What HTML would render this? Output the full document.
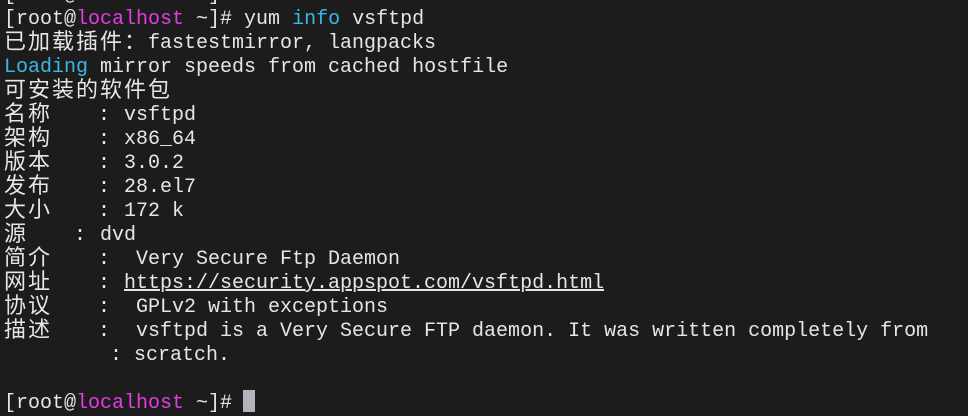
<!DOCTYPE html>
<html><head><meta charset="utf-8"><style>
html,body{margin:0;padding:0;background:#1c1c1c;width:968px;height:416px;overflow:hidden}
.l{position:absolute;left:4px;height:24px;line-height:24px;font-family:"Liberation Mono","Noto Sans CJK SC",monospace;font-size:20px;color:#e6e6e6;white-space:pre;letter-spacing:0}
.m{color:#e23de2}.c{color:#3cb6e4}
.a{position:absolute;top:0}
.z{font-family:"Noto Sans CJK SC",sans-serif;font-size:22px;letter-spacing:2px;display:inline-block;height:24px;line-height:24px;vertical-align:top;position:relative;top:-4px}
</style></head><body>
<div class="l" style="top:-16px">[root@localhost ~]</div>
<div class="l" style="top:8px">[root@<span class="m">localhost</span> ~]# yum <span class="c">info</span> vsftpd</div>
<div class="l" style="top:32px"><span class="z">已加载插件：</span><span class="a" style="left:144px">fastestmirror, langpacks</span></div>
<div class="l" style="top:56px"><span class="c">Loading</span> mirror speeds from cached hostfile</div>
<div class="l" style="top:80px"><span class="z">可安装的软件包</span></div>
<div class="l" style="top:104px"><span class="z">名称</span><span class="a" style="left:94px">:</span><span class="a" style="left:120px">vsftpd</span></div>
<div class="l" style="top:128px"><span class="z">架构</span><span class="a" style="left:94px">:</span><span class="a" style="left:120px">x86_64</span></div>
<div class="l" style="top:152px"><span class="z">版本</span><span class="a" style="left:94px">:</span><span class="a" style="left:120px">3.0.2</span></div>
<div class="l" style="top:176px"><span class="z">发布</span><span class="a" style="left:94px">:</span><span class="a" style="left:120px">28.el7</span></div>
<div class="l" style="top:200px"><span class="z">大小</span><span class="a" style="left:94px">:</span><span class="a" style="left:120px">172 k</span></div>
<div class="l" style="top:224px"><span class="z">源</span><span class="a" style="left:70px">:</span><span class="a" style="left:96px">dvd</span></div>
<div class="l" style="top:248px"><span class="z">简介</span><span class="a" style="left:94px">:</span><span class="a" style="left:132px">Very Secure Ftp Daemon</span></div>
<div class="l" style="top:272px"><span class="z">网址</span><span class="a" style="left:94px">:</span><span class="a" style="left:120px;text-decoration:underline">https://security.appspot.com/vsftpd.html</span></div>
<div class="l" style="top:296px"><span class="z">协议</span><span class="a" style="left:94px">:</span><span class="a" style="left:132px">GPLv2 with exceptions</span></div>
<div class="l" style="top:320px"><span class="z">描述</span><span class="a" style="left:94px">:</span><span class="a" style="left:132px">vsftpd is a Very Secure FTP daemon. It was written completely from</span></div>
<div class="l" style="top:344px"><span class="a" style="left:106px">: scratch.</span></div>
<div class="l" style="top:392px">[root@<span class="m">localhost</span> ~]# </div>
<div style="position:absolute;left:243px;top:390px;width:12px;height:22px;background:#b3b3bb"></div>
</body></html>
